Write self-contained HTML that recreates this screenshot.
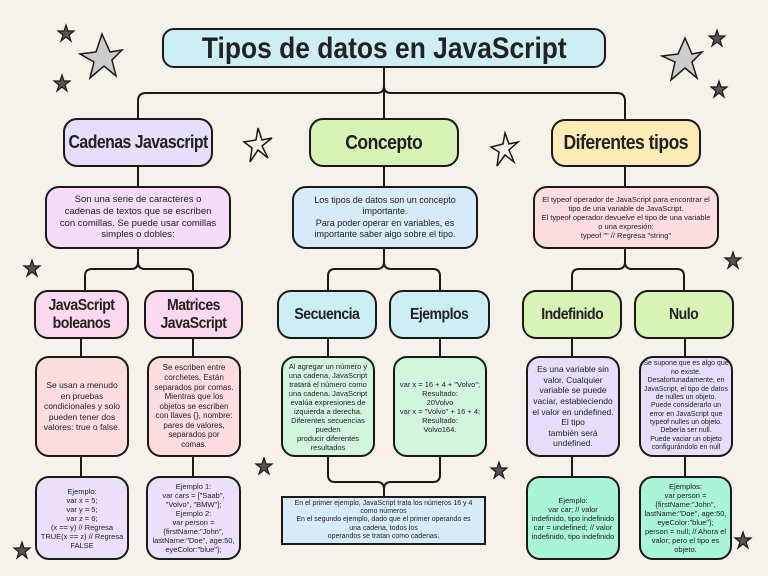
<!DOCTYPE html>
<html><head><meta charset="utf-8"><style>
*{margin:0;padding:0;box-sizing:border-box}
body{width:768px;height:576px;background:#f6f2ea;position:relative;overflow:hidden;font-family:"Liberation Sans",sans-serif;color:#222}
.b{position:absolute;border:2px solid #1a1a1a;border-radius:14px;display:flex;align-items:center;justify-content:center;text-align:center}
.h{font-weight:bold;font-size:17px;letter-spacing:-0.6px;line-height:1.1;transform:scaleX(0.88);white-space:nowrap}
.t{font-size:8.5px;line-height:1.25}
.s{font-size:7.5px;line-height:1.2}
svg{position:absolute;left:0;top:0}
</style></head><body>
<svg width="768" height="576" fill="none" stroke="#1a1a1a" stroke-width="2">
<path d="M384 67 V86 Q384 93 377 93 H146 Q138 93 138 101 V118"/>
<path d="M384 86 Q384 93 391 93 H617 Q625 93 625 101 V119"/>
<path d="M384 86 V118"/>
<path d="M138 166V186 M384 166V186 M625 166V186"/>
<path d="M138 248 V262 Q138 269 131 269 H92 Q85 269 85 276 V290 M138 262 Q138 269 145 269 H186 Q193 269 193 276 V290"/>
<path d="M384 248 V262 Q384 269 377 269 H335 Q328 269 328 276 V290 M384 262 Q384 269 391 269 H433 Q440 269 440 276 V290"/>
<path d="M625 248 V262 Q625 269 618 269 H579 Q572 269 572 276 V290 M625 262 Q625 269 632 269 H677 Q684 269 684 276 V290"/>
<path d="M81 338V356 M193 338V356 M328 338V356 M440 338V356 M572 338V356 M685 338V356"/>
<path d="M81 456V476 M193 456V476 M572 456V476 M685 456V476"/>
<path d="M328 456 V475 Q328 482 335 482 H377 Q384 482 384 489 V496 M440 456 V475 Q440 482 433 482 H391 Q384 482 384 489"/>
<g stroke-width="1.2" fill="#555">
<path d="M66 25 L68 31 L74 31 L69 35 L71 41 L66 37 L61 41 L63 35 L58 31 L64 31Z"/>
<path d="M62 75 L64 81 L70 81 L65 85 L67 91 L62 87 L57 91 L59 85 L54 81 L60 81Z"/>
<path d="M717 30 L719 36 L725 36 L720 40 L722 46 L717 42 L712 46 L714 40 L709 36 L715 36Z"/>
<path d="M719 81 L721 87 L727 87 L722 91 L724 97 L719 93 L714 97 L716 91 L711 87 L717 87Z"/>
<path d="M32 260 L34 266 L40 266 L35 270 L37 276 L32 272 L27 276 L29 270 L24 266 L30 266Z"/>
<path d="M733 252 L735 258 L741 258 L736 262 L738 268 L733 264 L728 268 L730 262 L725 258 L731 258Z"/>
<path d="M264 458 L266 464 L272 464 L267 468 L269 474 L264 470 L259 474 L261 468 L256 464 L262 464Z"/>
<path d="M499 462 L501 468 L507 468 L502 472 L504 478 L499 474 L494 478 L496 472 L491 468 L497 468Z"/>
<path d="M22 542 L24 548 L30 548 L25 552 L27 558 L22 554 L17 558 L19 552 L14 548 L20 548Z"/>
<path d="M743 532 L745 538 L751 538 L746 542 L748 548 L743 544 L738 548 L740 542 L735 538 L741 538Z"/>
</g>
<g stroke-width="1.5" fill="none">
<path d="M102 34 L110 52 L122 50 L112 60 L116 76 L104 66 L90 78 L94 62 L80 54 L96 52Z" fill="#ccc"/>
<path d="M685 38 L692 54 L702 52 L692 62 L697 78 L685 68 L671 80 L675 62 L662 56 L678 54Z" fill="#ccc"/>
<path d="M258 128 L262 140 L272 138 L262 146 L268 158 L258 150 L250 162 L252 148 L244 142 L256 140Z"/>
<path d="M505 133 L509 144 L518 142 L509 150 L514 162 L505 155 L497 166 L499 152 L491 147 L503 144Z"/>
</g>
</svg>

<div class="b" style="left:162px;top:28px;width:444px;height:40px;background:#cdeff3;border-radius:12px"><span class="h" style="font-size:30px;letter-spacing:0">Tipos de datos en JavaScript</span></div>

<div class="b" style="left:63px;top:118px;width:150px;height:49px;background:#e6defa"><span class="h" style="font-size:18px">Cadenas Javascript</span></div>
<div class="b" style="left:309px;top:118px;width:150px;height:49px;background:#d9f2b6"><span class="h" style="font-size:20px">Concepto</span></div>
<div class="b" style="left:551px;top:119px;width:150px;height:48px;background:#fdebb8"><span class="h" style="font-size:20px">Diferentes tipos</span></div>

<div class="b t" style="left:45px;top:186px;width:186px;height:63px;background:#f4dcfa;padding:0 12px;font-size:9.5px">Son una serie de caracteres o cadenas de textos que se escriben con comillas. Se puede usar comillas simples o dobles:</div>
<div class="b t" style="left:292px;top:186px;width:186px;height:63px;background:#d8ebfb;padding:0 6px;font-size:9px">Los tipos de datos son un concepto importante.<br>Para poder operar en variables, es importante saber algo sobre el tipo.</div>
<div class="b s" style="left:533px;top:186px;width:186px;height:63px;background:#fddde0;padding:0 4px;font-size:7.5px">El typeof operador de JavaScript para encontrar el tipo de una variable de JavaScript.<br>El typeof operador devuelve el tipo de una variable o una expresión:<br>typeof "" // Regresa "string"</div>

<div class="b" style="left:34px;top:290px;width:95px;height:49px;background:#fcd9ee"><span class="h" style="font-size:16px">JavaScript<br>boleanos</span></div>
<div class="b" style="left:144px;top:290px;width:99px;height:49px;background:#fcd9ee"><span class="h" style="font-size:16px">Matrices<br>JavaScript</span></div>
<div class="b" style="left:277px;top:290px;width:100px;height:49px;background:#cdeff3"><span class="h" style="font-size:16px">Secuencia</span></div>
<div class="b" style="left:389px;top:290px;width:101px;height:49px;background:#cdeff3"><span class="h" style="font-size:16px">Ejemplos</span></div>
<div class="b" style="left:522px;top:290px;width:100px;height:49px;background:#d9f2b6"><span class="h" style="font-size:16px">Indefinido</span></div>
<div class="b" style="left:634px;top:290px;width:100px;height:49px;background:#d9f2b6"><span class="h" style="font-size:16px">Nulo</span></div>

<div class="b t" style="left:35px;top:356px;width:94px;height:101px;background:#fddde0;padding:0 4px">Se usan a menudo en pruebas condicionales y solo pueden tener dos valores: true o false.</div>
<div class="b s" style="left:147px;top:356px;width:94px;height:101px;background:#fddde0;padding:0 3px;font-size:8px">Se escriben entre corchetes. Están separados por comas. Mientras que los objetos se escriben con llaves {}, nombre: pares de valores, separados por<br>comas.</div>
<div class="b s" style="left:281px;top:356px;width:94px;height:101px;background:#d2f5dd;padding:0 3px">Al agregar un número y una cadena, JavaScript tratará el número como una cadena. JavaScript evalúa expresiones de izquierda a derecha. Diferentes secuencias pueden<br>producir diferentes resultados</div>
<div class="b s" style="left:393px;top:356px;width:94px;height:101px;background:#d2f5dd;padding:0 2px">var x = 16 + 4 + "Volvo";<br>Resultado:<br>20Volvo<br>var x = "Volvo" + 16 + 4;<br>Resultado:<br>Volvo164.</div>
<div class="b t" style="left:526px;top:356px;width:94px;height:101px;background:#e6defa;padding:0 4px">Es una variable sin valor. Cualquier variable se puede vaciar, estableciendo el valor en undefined. El tipo<br>también será<br>undefined.</div>
<div class="b s" style="left:639px;top:356px;width:94px;height:101px;background:#e6defa;padding:0 2px;font-size:7px">Se supone que es algo que no existe. Desafortunadamente, en JavaScript, el tipo de datos de nulles un objeto.<br>Puede considerarlo un error en JavaScript que typeof nulles un objeto. Debería ser null.<br>Puede vaciar un objeto configurándolo en null</div>

<div class="b s" style="left:35px;top:476px;width:94px;height:84px;background:#ede0fd;padding:0 2px">Ejemplo:<br>var x = 5;<br>var y = 5;<br>var z = 6;<br>(x == y) // Regresa TRUE(x == z) // Regresa FALSE</div>
<div class="b s" style="left:146px;top:476px;width:95px;height:84px;background:#ede0fd;padding:0 2px">Ejemplo 1:<br>var cars = ["Saab", "Volvo", "BMW"];<br>Ejemplo 2:<br>var person = {firstName:"John", lastName:"Doe", age:50, eyeColor:"blue"};</div>
<div class="b s" style="left:526px;top:476px;width:94px;height:84px;background:#a8f5d8;padding:0 3px">Ejemplo:<br>var car; // valor indefinido, tipo indefinido<br>car = undefined; // valor indefinido, tipo indefinido</div>
<div class="b s" style="left:639px;top:476px;width:93px;height:84px;background:#a8f5d8;padding:0 2px">Ejemplos:<br>var person = {firstName:"John", lastName:"Doe", age:50, eyeColor:"blue"};<br>person = null; // Ahora el valor; pero el tipo es objeto.</div>

<div class="b" style="left:281px;top:496px;width:205px;height:49px;background:#d8ebfb;border-radius:0;font-size:7px;line-height:1.2;padding:0 8px">En el primer ejemplo, JavaScript trata los números 16 y 4 como números<br>En el segundo ejemplo, dado que el primer operando es una cadena, todos los<br>operandos se tratan como cadenas.</div>
</body></html>
